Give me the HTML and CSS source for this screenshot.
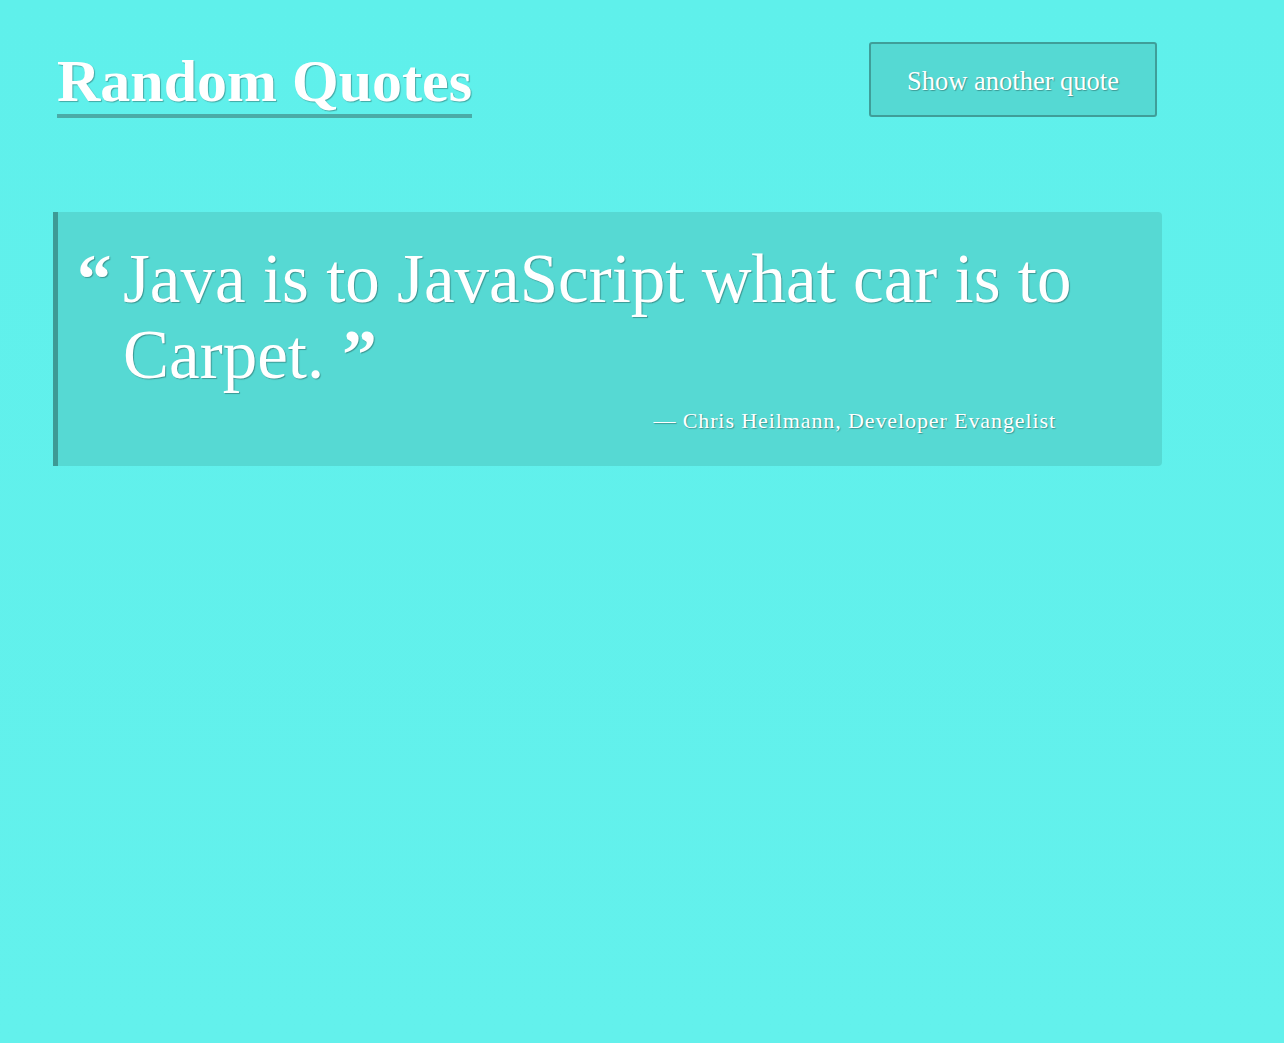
FILE: index.html
```html
<!DOCTYPE html>
<html lang="en">
<head>
<meta charset="utf-8">
<title>Random Quotes</title>
<link rel="stylesheet" href="styles.css">
</head>
<body>
<div class="page">
  <header class="header">
    <h1 class="title">Random Quotes</h1>
    <button class="btn" type="button">Show another quote</button>
  </header>
  <blockquote class="quote">
    <p class="quote-text"><span class="mark open">“</span>Java is to JavaScript what car is to Carpet.<span class="mark close">”</span></p>
    <p class="cite">— Chris Heilmann, Developer Evangelist</p>
  </blockquote>
</div>
</body>
</html>
```
FILE: styles.css
```css
html, body {
  margin: 0;
  height: 100%;
}
body {
  background: linear-gradient(#5ff0eb, #63f1ec);
  font-family: "Liberation Serif", "DejaVu Serif", serif;
  color: #fff;
}
.page {
  padding: 42px 122px 0 53px;
}
.header {
  display: flex;
  justify-content: space-between;
  align-items: flex-start;
  padding: 0 5px 0 4px;
}
.title {
  margin: 6px 0 0;
  font-size: 60px;
  line-height: 66px;
  font-weight: bold;
  border-bottom: 4px solid #4aaba7;
  text-shadow: 1px 1px 1px rgba(0,0,0,0.3);
}
.btn {
  width: 288px;
  height: 75px;
  background: #55d9d3;
  border: 2px solid #3f9e99;
  border-radius: 3px;
  color: #fff;
  font-family: inherit;
  font-size: 26.5px;
  text-shadow: 1px 1px 1px rgba(0,0,0,0.3);
  padding: 4px 0 0;
}
.quote {
  margin: 94px 0 0;
  background: #56d9d3;
  border-left: 5px solid #3d9a95;
  border-radius: 0 4px 4px 0;
  padding: 29px 40px 33px 65px;
  text-shadow: 1px 1px 1px rgba(0,0,0,0.3);
}
.quote-text {
  margin: 0;
  font-size: 69px;
  line-height: 76px;
  position: relative;
}
.mark {
  font-weight: bold;
}
.mark.close {
  margin-left: 18px;
}
.mark.open {
  position: absolute;
  left: -46px;
  top: 0;
}
.cite {
  margin: 16px 66px 0 0;
  text-align: right;
  font-size: 22px;
  line-height: 24px;
  letter-spacing: 0.9px;
}
```
